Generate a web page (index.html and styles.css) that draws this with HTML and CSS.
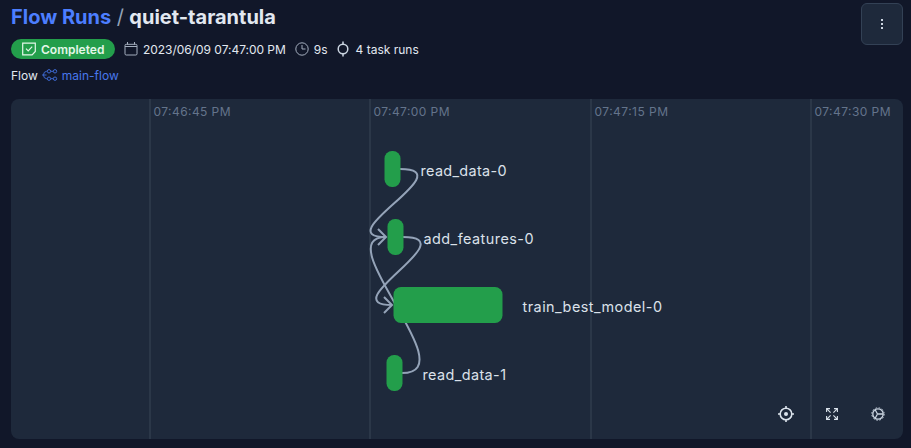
FILE: index.html
```html
<!DOCTYPE html>
<html lang="en">
<head>
<meta charset="utf-8">
<title>Flow Runs / quiet-tarantula</title>
<link rel="stylesheet" href="styles.css">
</head>
<body>
<header class="header">
  <div class="summary">
    <h1 class="title"><a class="crumb">Flow Runs</a><span class="slash">/</span><span>quiet-tarantula</span></h1>
    <div class="meta">
      <span class="badge">
        <svg width="16" height="14" viewBox="0 0 16 14"><path d="M1.700 1.200h12.600v8.300l-3.200 3.300H1.700z"/><path d="m5 6.700 2.200 2.200 4-4.300"/></svg>
        <span>Completed</span>
      </span>
      <span class="item date"><svg width="14" height="14" viewBox="0 0 14 14"><path d="M2.200 2.300h9.600q1.200 0 1.200 1.200v8.300q0 1.200-1.200 1.200H2.200Q1 13 1 11.800V3.500q0-1.200 1.200-1.200zM1 4.500h12M3.500 0v2.500M10.500 0v2.500"/></svg><span>2023/06/09 07:47:00 PM</span></span>
      <span class="item duration"><svg width="14" height="14" viewBox="0 0 14 14"><circle cx="7" cy="7" r="6.200"/><path d="M7 3v4h3.500"/></svg><span>9s</span></span>
      <span class="item tasks"><svg width="12" height="16" viewBox="0 0 12 16"><circle cx="6" cy="8" r="4.800"/><path d="M6 .500v2.700M6 12.800v2.700"/></svg><span>4 task runs</span></span>
    </div>
    <div class="flow">
      <span>Flow</span>
      <svg width="16" height="12" viewBox="0 0 16 12"><circle cx="7" cy="2.300" r="1.700"/><circle cx="13" cy="2.300" r="1.700"/><circle cx="7" cy="9.700" r="1.700"/><circle cx="13" cy="9.700" r="1.700"/><path d="M8.700 2.300h2.600M8.700 9.700h2.600M5.300 2.300H4.500Q1.500 2.600 1.500 6t3 3.700h.800M0 6h4.500"/></svg>
      <a>main-flow</a>
    </div>
  </div>
  <button class="menu" aria-label="Menu"><i></i><i></i><i></i></button>
</header>
<main class="timeline">
  <svg class="graph" width="892" height="340" viewBox="11 99 892 340">
    <g class="grid"><path d="M150 99v340M370 99v340M591 99v340M811 99v340"/></g>
    <g class="times">
      <text x="153.500" y="116" textLength="77">07:46:45 PM</text>
      <text x="373.500" y="116" textLength="76">07:47:00 PM</text>
      <text x="594.500" y="116" textLength="73.500">07:47:15 PM</text>
      <text x="814.500" y="116" textLength="76">07:47:30 PM</text>
    </g>
    <g class="edges">
      <path d="M400 169C464 169 326 237 386 237"/>
      <path d="M403 237C467 237 332 305 392 305"/>
      <path d="M402 373C467 373 326 237 386 237"/>
      <path d="m378 229 8 8-8 8M384 297l8 8-8 8"/>
    </g>
    <g class="nodes">
      <rect x="384.500" y="151" width="16" height="36" rx="7.500"/>
      <rect x="387.500" y="219" width="16" height="36" rx="7.500"/>
      <rect x="393.500" y="287" width="109" height="36" rx="7.500"/>
      <rect x="386.500" y="355" width="16" height="36" rx="7.500"/>
    </g>
    <g class="labels">
      <text x="420.500" y="176" textLength="86">read_data-0</text>
      <text x="423.500" y="244" textLength="110">add_features-0</text>
      <text x="522.500" y="312" textLength="139.500">train_best_model-0</text>
      <text x="422.500" y="380" textLength="83.500">read_data-1</text>
    </g>
  </svg>
  <div class="controls">
    <svg width="16" height="16" viewBox="0 0 16 16"><circle cx="8" cy="8" r="5.800"/><circle class="dot" cx="8" cy="8" r="2"/><path d="M8 0v3M8 13v3M0 8h3M13 8h3"/></svg>
    <svg class="expand" width="12" height="12" viewBox="0 0 12 12"><path d="M.600 4V.600H4M8 .600h3.400V4M11.400 8v3.400H8M4 11.400H.600V8M.600.600l4 4M11.400.600l-4 4M11.400 11.400l-4-4M.600 11.400l4-4"/></svg>
    <svg class="gear" width="14" height="14" viewBox="0 0 14 14"><circle cx="7" cy="7" r="5.200"/><circle class="teeth" cx="7" cy="7" r="6.200"/><path d="M6.500 7H12M6.500 7 4.300 3M6.500 7l-2.200 4"/></svg>
  </div>
</main>
</body>
</html>
```

FILE: styles.css
```css
* { box-sizing: border-box; }

body {
  margin: 0;
  height: 448px;
  overflow: hidden;
  padding: 3px 8px 9px 11px;
  background: #111729;
  color: #e2e8f0;
  font-family: Inter, sans-serif;
  font-size: 12px;
}

svg { display: block; flex: none; fill: none; stroke: currentColor; }

.header { display: flex; justify-content: space-between; height: 96px; }
.title { display: flex; margin: 0; font-size: 20px; line-height: 28px; font-weight: 700; }
.crumb { color: #4c7eff; }
.slash { margin: 0 5.5px; color: #94a3b8; font-weight: 400; }

.meta { display: flex; align-items: center; height: 20px; margin-top: 8px; }
.badge {
  display: flex;
  align-items: center;
  gap: 4px;
  width: 104px;
  height: 20px;
  padding-left: 10px;
  border-radius: 10px;
  background: #239e4b;
  color: #e4f7e9;
  font-weight: 600;
}
.badge svg { stroke-width: 1.2; }
.item { display: flex; align-items: center; gap: 5px; white-space: nowrap; }
.item svg { color: #a5afbf; }
.date { margin-left: 9px; letter-spacing: -0.03px; }
.duration { margin-left: 9px; }
.tasks { margin-left: 9px; gap: 7px; }
.tasks svg { color: #cbd5e1; stroke-width: 1.5; }

.flow { display: flex; align-items: center; gap: 4px; height: 16px; margin-top: 8px; }
.flow svg { color: #3d68cf; margin-top: -1px; }
.flow a { color: #4878ed; }

.menu {
  display: flex;
  flex-direction: column;
  align-items: center;
  justify-content: center;
  gap: 2px;
  width: 42px;
  height: 42px;
  padding: 0;
  border: 1px solid #334155;
  border-radius: 6px;
  background: #1e293b;
}
.menu i { width: 2px; height: 2px; background: #cbd5e1; }

.timeline {
  position: relative;
  height: 340px;
  overflow: hidden;
  border-radius: 8px;
  background: #1e293b;
}
.graph text { stroke: none; }
.grid { stroke: #2b3748; stroke-width: 2; }
.times { fill: #64748b; font-size: 12px; }
.edges { stroke: #94a3b8; stroke-width: 2; }
.nodes { fill: #239e4b; stroke: none; }
.labels { fill: #dbe1ea; font-size: 14.4px; }

.controls {
  position: absolute;
  right: 18px;
  bottom: 17px;
  display: flex;
  align-items: center;
  color: #dbe3ec;
}
.controls svg { stroke-width: 1.6; }
.controls .dot { fill: currentColor; stroke: none; }
.controls .expand { margin: 0 33px 0 32px; stroke-width: 1.1; }
.controls .gear { stroke-width: 1.3; color: #cbd5e1; }
.controls .teeth { stroke-width: 1; stroke-dasharray: 1.62 1.62; }
```
